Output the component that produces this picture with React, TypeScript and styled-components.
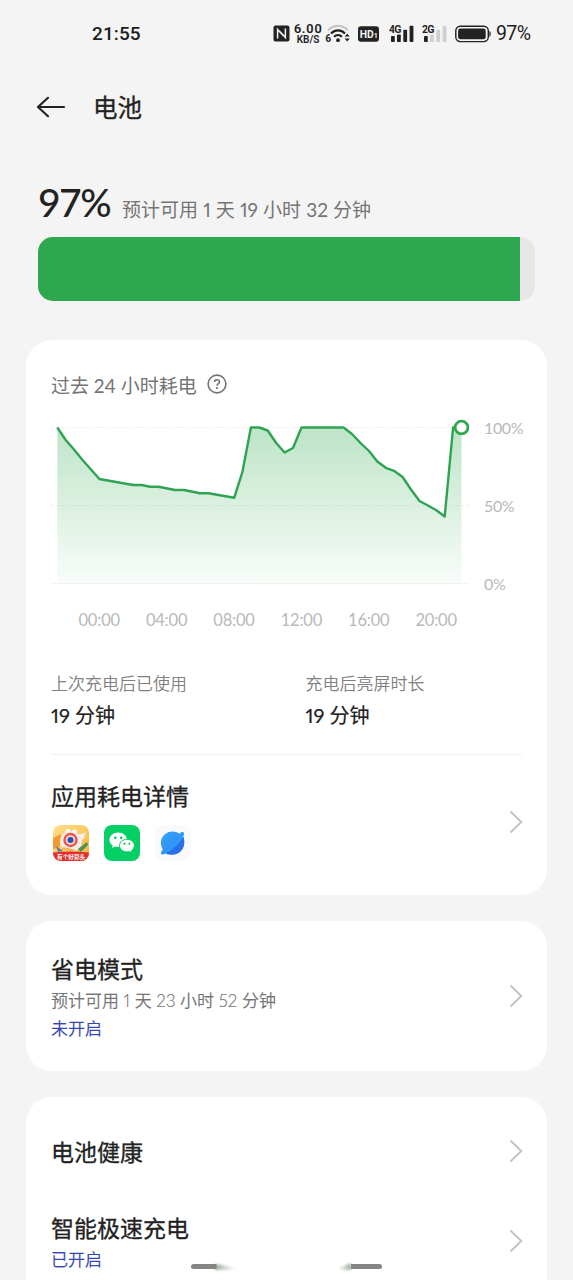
import React from "react";
import styled, { createGlobalStyle } from "styled-components";

const GlobalStyle = createGlobalStyle`
  * { box-sizing: border-box; }
  body {
    margin: 0;
    background: #f4f4f4;
    color: #222;
    font-family: Lato, "Noto Sans CJK SC", sans-serif;
    font-variant-numeric: proportional-nums;
  }
`;

const Screen = styled.div`
  position: relative;
  width: 573px;
  height: 1280px;
  overflow: hidden;
  display: flex;
  flex-direction: column;
`;

const StatusBar = styled.div`
  height: 67px;
  display: flex;
  align-items: center;
  justify-content: space-between;
  padding: 0 41px 0 92px;
  flex: none;
`;

const Clock = styled.span`
  font: 500 19px/26px Roboto, sans-serif;
  letter-spacing: 0.1px;
  color: #1d1d1d;
`;

const StatusIcons = styled.div`
  display: flex;
  align-items: center;
  height: 26px;
`;

const StatusGlyph = styled.svg<{ $gap?: number }>`
  display: block;
  flex: none;
  margin-right: ${(p) => p.$gap ?? 0}px;
`;

const Speed = styled.div`
  width: 28px;
  margin-right: 3px;
  display: flex;
  flex-direction: column;
  align-items: center;
  font-family: Roboto, sans-serif;
  font-weight: 600;
  color: #1d1d1d;
  white-space: nowrap;
  span:first-child { font-size: 13px; line-height: 12px; letter-spacing: 0.5px; }
  span:last-child { font-size: 10px; line-height: 9px; }
`;

const StatusPercent = styled.span`
  font: 400 19.5px/26px Roboto, sans-serif;
  color: #1d1d1d;
  width: 36px;
  white-space: nowrap;
  letter-spacing: -0.6px;
`;

const TitleBar = styled.header`
  height: 79px;
  padding: 0 36px;
  display: flex;
  align-items: center;
  gap: 27px;
  flex: none;
`;

const Title = styled.h1`
  margin: 2px 0 0;
  font-size: 24.5px;
  line-height: 36px;
  font-weight: 400;
  -webkit-text-stroke: 0.3px #222;
`;

const Summary = styled.section`
  padding: 32px 38px 0;
  flex: none;
`;

const SummaryLine = styled.div`
  height: 59px;
  display: flex;
  align-items: baseline;
  white-space: nowrap;
`;

const Level = styled.span`
  width: 84px;
  font: 500 39px/48px Lato, sans-serif;
  letter-spacing: -1.5px;
`;

const Estimate = styled.span`
  font-size: 19px;
  line-height: 28px;
  color: #747474;
  word-spacing: 0.3px;
`;

const Meter = styled.div`
  height: 64px;
  border-radius: 15px;
  background: #e7e7e7;
  overflow: hidden;
`;

const MeterFill = styled.div`
  height: 100%;
  background: #2da84e;
`;

const Cards = styled.main`
  padding: 39px 26px 0;
  display: flex;
  flex-direction: column;
  gap: 26px;
`;

const Card = styled.section<{ $height: number; $top: number }>`
  height: ${(p) => p.$height}px;
  padding: ${(p) => p.$top}px 24px 0 25px;
  border-radius: 26px;
  background: #fff;
  flex: none;
`;

const ChartHeading = styled.div`
  height: 28px;
  display: flex;
  align-items: center;
  gap: 10px;
  font-size: 19px;
  color: #747474;
  white-space: nowrap;
`;

const ChartRow = styled.div`
  display: flex;
  margin-top: 19px;
`;

const Plot = styled.svg`
  display: block;
  flex: none;
`;

const Levels = styled.div`
  height: 178px;
  margin-left: 15px;
  display: flex;
  flex-direction: column;
  justify-content: space-between;
  font-size: 16px;
  line-height: 22px;
  color: #b9b9b9;
  font-variant-numeric: tabular-nums;
  letter-spacing: -0.4px;
`;

const Hours = styled.div`
  display: grid;
  grid-template-columns: repeat(6, 67.4px);
  margin: 12px 0 0 14.5px;
  text-align: center;
  font-size: 16.5px;
  line-height: 22px;
  color: #b9b9b9;
  font-variant-numeric: tabular-nums;
  letter-spacing: -0.2px;
`;

const Stats = styled.div`
  display: grid;
  grid-template-columns: 254.5px 1fr;
  height: 124px;
  padding-top: 40px;
  margin-right: 1px;
  border-bottom: 1px solid #efefef;
`;

const StatName = styled.div`
  font-size: 17px;
  line-height: 26px;
  color: #808080;
  font-weight: 350;
`;

const StatValue = styled.div`
  margin-top: 3px;
  font-size: 20px;
  line-height: 30px;
  -webkit-text-stroke: 0.2px #222;
`;

const Row = styled.div<{ $height: number }>`
  height: ${(p) => p.$height}px;
  display: flex;
  align-items: center;
  justify-content: space-between;
`;

const RowTitle = styled.div`
  margin-top: 2px;
  font-size: 23px;
  line-height: 34px;
  -webkit-text-stroke: 0.3px #222;
`;

const RowNote = styled.div`
  font-size: 17px;
  line-height: 28px;
  font-weight: 350;
  color: #747474;
  white-space: nowrap;
  -webkit-text-stroke: 0.15px currentColor;
`;

const RowState = styled(RowNote)`
  color: #3344b4;
`;

const RowDetails = styled.div`
  padding-top: 1px;
`;

const AppIcons = styled.div`
  display: flex;
  gap: 15px;
  margin: 12px 0 7px 2px;
`;

const HomeBar = styled.svg`
  position: absolute;
  left: 185px;
  top: 1256px;
`;

const points: [number, number][] = [
  [57.3, 427.5], [65.7, 440], [74, 449.5], [82.5, 460], [91, 469.5], [99.4, 479],
  [107.8, 480.5], [133, 485], [141.6, 485], [150, 486.7], [158.5, 486.7], [175, 490],
  [184, 490], [200, 493.2], [208.6, 493.2], [234.2, 497.8], [242.4, 472], [250.9, 427.5],
  [259.3, 427.5], [267.7, 430.5], [276.2, 443], [284.6, 452.5], [293, 448], [301.5, 427.5],
  [343.6, 427.5], [352, 434], [360.5, 443], [369, 451], [377.3, 461.5], [385.8, 467.8],
  [394, 470.8], [402.6, 477], [411, 489.5], [419.5, 501], [427.9, 505.5], [436, 510],
  [444.7, 516.5], [453.1, 427.5], [461.5, 427.5],
];
const line = points.map(([x, y]) => `${x},${y}`).join(" ");

const Chart = () => (
  <Plot width="418" height="180" viewBox="51 417 418 180">
    <defs>
      <linearGradient id="fade" x1="0" y1="0" x2="0" y2="1">
        <stop offset="0" stopColor="#2da84e" stopOpacity="0.31" />
        <stop offset="1" stopColor="#2da84e" stopOpacity="0.03" />
      </linearGradient>
    </defs>
    <polygon points={`${line} 461.5,584 57.3,584`} fill="url(#fade)" />
    <path d="M51 427.5H469M51 505.5H469" stroke="#000" strokeOpacity=".05" strokeDasharray="3 2" />
    <path d="M51 583.5H469" stroke="#000" strokeOpacity=".04" />
    <polyline points={line} fill="none" stroke="#2ea452" strokeWidth="2.4" strokeLinejoin="round" />
    <circle cx="461.5" cy="427.5" r="6.4" fill="#fff" stroke="#2da84e" strokeWidth="2.8" />
  </Plot>
);

const Chevron = () => (
  <svg width="14" height="24" viewBox="0 0 14 24" fill="none" stroke="#c4c4c4" strokeWidth="2">
    <path d="M1.5 1.5L12.3 12L1.5 22.5" />
  </svg>
);

const BackArrow = () => (
  <svg width="30" height="24" viewBox="0 0 30 24" fill="none" stroke="#222" strokeWidth="2.2" strokeLinejoin="round" strokeLinecap="round">
    <path d="M28 12H2.2M12 2.8L2 12L12 21.2" />
  </svg>
);

const HelpIcon = () => (
  <svg width="20" height="20" viewBox="0 0 20 20" fill="none" stroke="#747474" strokeWidth="1.6">
    <circle cx="10" cy="10" r="8.9" />
    <path d="M7.5 8.1C7.5 6.5 8.6 5.7 10 5.7S12.5 6.6 12.5 7.9C12.5 9.6 10 9.8 10 11.8" />
    <circle cx="10" cy="14.1" r="1.1" fill="#747474" stroke="none" />
  </svg>
);

const NfcIcon = () => (
  <StatusGlyph $gap={4} width="17" height="17" viewBox="0 0 17 17">
    <rect x="0.5" y="0.5" width="16" height="16" rx="2" fill="#222" />
    <path d="M4.6 13.6V4.4L10.4 10.8M12.4 3.4V12.6L6.6 6.2" fill="none" stroke="#f4f4f4" strokeWidth="1.5" />
  </StatusGlyph>
);

const WifiIcon = () => (
  <StatusGlyph $gap={7} width="26" height="20" viewBox="0 0 26 20">
    <path d="M3.2 6.2C8.5.3 17.5.3 22.8 6.2" fill="none" stroke="#c6c6c6" strokeWidth="2.2" />
    <path d="M6 9.5C10 5.3 16 5.3 20 9.5" fill="none" stroke="#222" strokeWidth="2.2" />
    <path d="M9 12.8C11.3 10.6 14.7 10.6 17 12.8" fill="none" stroke="#222" strokeWidth="2.1" />
    <circle cx="13" cy="16.2" r="1.9" fill="#222" />
    <path d="M19.6 12.6L22.2 9.8L24.8 12.6ZM19.6 14.6H24.8L22.2 17.5Z" fill="#222" />
    <text x="0.3" y="18" fontFamily="Roboto, sans-serif" fontWeight="700" fontSize="10" fill="#222">6</text>
  </StatusGlyph>
);

const HdIcon = () => (
  <StatusGlyph $gap={10} width="21" height="16" viewBox="0 0 21 16">
    <rect width="21" height="15.5" y=".3" rx="3" fill="#222" />
    <text x="1.8" y="12.2" fontFamily="Roboto, sans-serif" fontWeight="700" fontSize="11.5" textLength="14" lengthAdjust="spacingAndGlyphs" fill="#f4f4f4">HD</text>
    <text x="16" y="12.2" fontFamily="Roboto, sans-serif" fontWeight="700" fontSize="7" fill="#f4f4f4">1</text>
  </StatusGlyph>
);

const SignalIcon = ({ label, bars, gap }: { label: string; bars: number; gap: number }) => (
  <StatusGlyph $gap={gap} width="26" height="20" viewBox="0 0 26 20">
    {[[2, 12], [8, 10.5], [14.3, 5.8], [20.6, 1.8]].map(([x, y], i) => (
      <rect key={x} x={x} y={y} width="3.8" height={18 - y} rx=".8" fill={i < bars ? "#222" : "#d0d0d0"} />
    ))}
    <text x="0" y="9.3" fontFamily="Roboto, sans-serif" fontWeight="700" fontSize="10.5" textLength="12.5" fill="#222" stroke="#f4f4f4" strokeWidth="1.2" paintOrder="stroke">{label}</text>
  </StatusGlyph>
);

const BatteryIcon = () => (
  <StatusGlyph $gap={4} width="37" height="18" viewBox="0 0 37 18">
    <rect x=".8" y="1.2" width="32.5" height="15.4" rx="4.5" fill="none" stroke="#222" strokeWidth="1.4" />
    <rect x="3.1" y="3.5" width="27.6" height="10.8" rx="2.4" fill="#222" />
    <path d="M34.4 6C36.2 6.5 36.2 11.3 34.4 11.8Z" fill="#222" />
  </StatusGlyph>
);

const MonsterCameraIcon = () => (
  <svg width="36" height="36" viewBox="0 0 36 36">
    <defs>
      <linearGradient id="sun" x1="0" y1="0" x2="1" y2="1">
        <stop offset="0" stopColor="#ffe08a" />
        <stop offset="1" stopColor="#f4b53c" />
      </linearGradient>
      <clipPath id="tile"><rect width="36" height="36" rx="8" /></clipPath>
    </defs>
    <g clipPath="url(#tile)">
      <rect width="36" height="36" fill="url(#sun)" />
      <path d="M0 13L8 9L7 22L0 24Z" fill="#f39a2f" />
      <circle cx="15" cy="6.5" r="2.5" fill="#fff" />
      <circle cx="21.5" cy="7" r="2.5" fill="#fff" />
      <path d="M26 10L33 7L30 15Z" fill="#f8f1e5" />
      <ellipse cx="18" cy="16.5" rx="11" ry="10.5" fill="#f7ece8" />
      <circle cx="17.5" cy="15" r="7.2" fill="#e8574a" />
      <circle cx="17.5" cy="15" r="4.8" fill="#f7d9d4" />
      <circle cx="17.5" cy="15" r="3" fill="#2a4fae" />
      <path d="M10 22L23 25L17 27L9 24Z" fill="#f2b44d" />
      <path d="M25 24L34 17L35 20L28 27Z" fill="#4f9150" />
      <path d="M3 21L10 26L5 27Z" fill="#6d74ad" />
      <path d="M0 27.5Q18 25.5 36 27.5V36H0Z" fill="#e22f2b" />
      <text x="4" y="33.8" fontFamily="'Noto Sans CJK SC', sans-serif" fontWeight="700" fontSize="5.7" fill="#fff">有个好彩头</text>
    </g>
  </svg>
);

const WeChatIcon = () => (
  <svg width="36" height="36" viewBox="0 0 36 36">
    <rect width="36" height="36" rx="8" fill="#04d065" />
    <path d="M14.2 7.5C9.2 7.5 5.5 10.8 5.5 14.8C5.5 17.1 6.7 19.1 8.7 20.4L8 23.1L11 21.5C12 21.8 13.1 22 14.2 22C19.2 22 22.9 18.8 22.9 14.8S19.2 7.5 14.2 7.5Z" fill="#fff" />
    <path d="M23 14.3C18.8 14.3 15.5 17.1 15.5 20.6S18.8 26.9 23 26.9C23.9 26.9 24.8 26.7 25.7 26.5L28.2 27.8L27.6 25.4C29.4 24.3 30.4 22.6 30.4 20.6C30.4 17.1 27.1 14.3 23 14.3Z" fill="#fff" stroke="#04d065" strokeWidth="1" />
    <g fill="#04b85a">
      <circle cx="11.3" cy="12.7" r="1.2" /><circle cx="17.2" cy="12.7" r="1.2" />
      <circle cx="20.5" cy="18.7" r="1" /><circle cx="25.4" cy="18.7" r="1" />
    </g>
  </svg>
);

const BrowserIcon = () => (
  <svg width="36" height="36" viewBox="0 0 36 36">
    <defs>
      <linearGradient id="globe" x1="0" y1="0" x2="1" y2="1">
        <stop offset="0" stopColor="#35a9fb" />
        <stop offset="1" stopColor="#2b7cf0" />
      </linearGradient>
    </defs>
    <rect width="36" height="36" rx="8" fill="#f9f9fb" />
    <circle cx="17.5" cy="18" r="11.6" fill="url(#globe)" />
    <path d="M25 8C28 6 30 7.2 28.6 10.8C24.5 19 15.5 26.3 9.5 29C6 30.4 5 28.8 7 25.3C15 23.5 23 16 25 8Z" fill="#2f9af6" />
    <path d="M28.3 11.4C24.5 19 17 25.3 10.5 28.4C14 30.2 20 30.2 24.5 27C29.5 23.5 30.4 16 28.3 11.4Z" fill="#2a6fea" />
  </svg>
);

export default function App() {
  const battery = 97;
  return (
    <>
      <GlobalStyle />
      <Screen>
        <StatusBar>
          <Clock>21:55</Clock>
          <StatusIcons>
            <NfcIcon />
            <Speed><span>6.00</span><span>KB/S</span></Speed>
            <WifiIcon />
            <HdIcon />
            <SignalIcon label="4G" bars={4} gap={7} />
            <SignalIcon label="2G" bars={1} gap={7} />
            <BatteryIcon />
            <StatusPercent>{battery}%</StatusPercent>
          </StatusIcons>
        </StatusBar>
        <TitleBar>
          <BackArrow />
          <Title>电池</Title>
        </TitleBar>
        <Summary>
          <SummaryLine>
            <Level>{battery}%</Level>
            <Estimate>预计可用 1 天 19 小时 32 分钟</Estimate>
          </SummaryLine>
          <Meter>
            <MeterFill style={{ width: `${battery}%` }} />
          </Meter>
        </Summary>
        <Cards>
          <Card $height={555} $top={30}>
            <ChartHeading>过去 24 小时耗电 <HelpIcon /></ChartHeading>
            <ChartRow>
              <Chart />
              <Levels><span>100%</span><span>50%</span><span>0%</span></Levels>
            </ChartRow>
            <Hours>
              {["00:00", "04:00", "08:00", "12:00", "16:00", "20:00"].map((h) => <span key={h}>{h}</span>)}
            </Hours>
            <Stats>
              <div><StatName>上次充电后已使用</StatName><StatValue>19 分钟</StatValue></div>
              <div><StatName>充电后亮屏时长</StatName><StatValue>19 分钟</StatValue></div>
            </Stats>
            <Row $height={134}>
              <div>
                <RowTitle>应用耗电详情</RowTitle>
                <AppIcons><MonsterCameraIcon /><WeChatIcon /><BrowserIcon /></AppIcons>
              </div>
              <Chevron />
            </Row>
          </Card>
          <Card $height={150} $top={25}>
            <Row $height={100}>
              <div>
                <RowTitle>省电模式</RowTitle>
                <RowDetails>
                  <RowNote>预计可用 1 天 23 小时 52 分钟</RowNote>
                  <RowState>未开启</RowState>
                </RowDetails>
              </div>
              <Chevron />
            </Row>
          </Card>
          <Card $height={260} $top={12}>
            <Row $height={84}><RowTitle>电池健康</RowTitle><Chevron /></Row>
            <Row $height={96}>
              <div>
                <RowTitle>智能极速充电</RowTitle>
                <RowDetails><RowState>已开启</RowState></RowDetails>
              </div>
              <Chevron />
            </Row>
          </Card>
        </Cards>
        <HomeBar width="204" height="20" viewBox="185 1256 204 20">
          <defs>
            <linearGradient id="fadeRight"><stop offset="0" stopColor="#7d9480" stopOpacity=".8" /><stop offset="1" stopColor="#b9cbbb" stopOpacity="0" /></linearGradient>
            <linearGradient id="fadeLeft"><stop offset="0" stopColor="#b9cbbb" stopOpacity="0" /><stop offset="1" stopColor="#7d9480" stopOpacity=".8" /></linearGradient>
            <filter id="soft" x="-30%" y="-50%" width="160%" height="200%"><feGaussianBlur stdDeviation="1" /></filter>
          </defs>
          <path d="M215 1264Q228 1265 239 1270H215Z" fill="url(#fadeRight)" filter="url(#soft)" />
          <path d="M351 1263Q344 1265 336 1270H351Z" fill="url(#fadeLeft)" filter="url(#soft)" />
          <path d="M216.5 1266.5H193.5" stroke="#858585" strokeWidth="5" />
          <circle cx="193.5" cy="1266.5" r="2.5" fill="#858585" />
          <path d="M351 1266.5H379.5" stroke="#858585" strokeWidth="5" />
          <circle cx="379.5" cy="1266.5" r="2.5" fill="#858585" />
        </HomeBar>
      </Screen>
    </>
  );
}
